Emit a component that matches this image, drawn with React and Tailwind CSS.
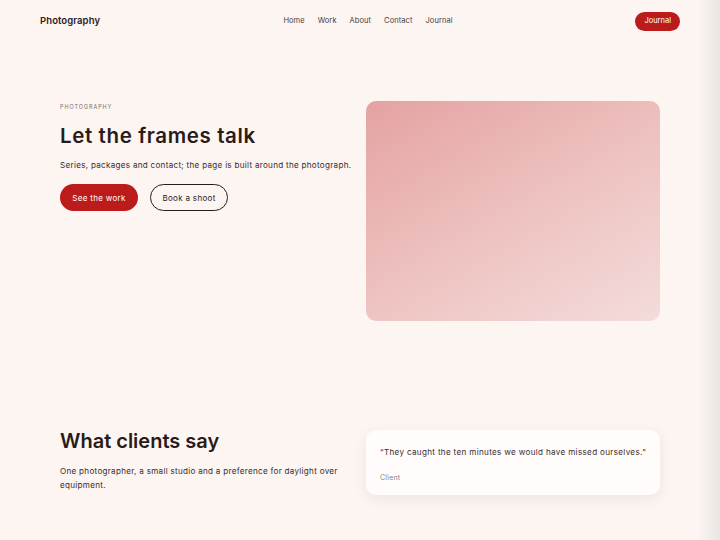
import React from "react";

// Photography landing: nav, hero with image block, testimonial strip
const navLinks = ["Home", "Work", "About", "Contact", "Journal"];

export default function App() {
  return (
    <div
      className="min-h-[540px] bg-[linear-gradient(to_right,#fcf5f2_calc(100%-22px),#e8e5e3)] text-[#2a1b1b]"
      style={{ fontFamily: "Inter, 'Noto Sans', sans-serif" }}
    >
      {/* Top bar */}
      <header className="flex h-[42px] items-center px-[40px]">
        <div className="flex-1 text-[9.5px] font-semibold tracking-[0.01em]">Photography</div>
        <nav className="ml-[16px] flex items-center gap-[13px] text-[7.5px] tracking-[0.01em] text-[#4a3c3c]">
          {navLinks.map((l) => (
            <a key={l} href="#">{l}</a>
          ))}
        </nav>
        <div className="flex flex-1 justify-end">
          <button className="h-[19px] rounded-full bg-[#bb1b1b] px-[9px] text-[7.5px] text-white">
            Journal
          </button>
        </div>
      </header>

      {/* Hero */}
      <section className="mx-auto mt-[59px] grid w-[600px] grid-cols-2 gap-[12px]">
        <div className="pt-[2px]">
          <p className="text-[5.5px] uppercase tracking-[0.17em] text-[#7a6d6b]">Photography</p>
          <h1 className="mt-[13px] text-[20.5px] font-semibold leading-[24px] tracking-[0.03em]">
            Let the frames talk
          </h1>
          <p className="mt-[11px] whitespace-nowrap text-[8.1px] tracking-[0.035em] text-[#3a2c2c]">
            Series, packages and contact; the page is built around the photograph.
          </p>
          <div className="mt-[13px] flex gap-[12px]">
            <button className="h-[27px] w-[78px] rounded-full bg-[#bb1b1b] text-[8px] tracking-[0.04em] text-white">
              See the work
            </button>
            <button className="h-[27px] w-[78px] rounded-full border border-[#2a1b1b] text-[8px] tracking-[0.04em]">
              Book a shoot
            </button>
          </div>
        </div>
        <div className="h-[220px] rounded-[10px] bg-[linear-gradient(150deg,#e4a2a2_0%,#edc1bf_50%,#f3dcda_100%)]" />
      </section>

      {/* Testimonials */}
      <section className="mx-auto mt-[109px] grid w-[600px] grid-cols-2 gap-[12px]">
        <div>
          <h2 className="text-[20px] font-semibold leading-[22px]">What clients say</h2>
          <p className="mt-[12px] w-[290px] text-[8.1px] leading-[14px] tracking-[0.035em] text-[#3a2c2c]">
            One photographer, a small studio and a preference for daylight over equipment.
          </p>
        </div>
        <div className="h-[65px] rounded-[10px] bg-[#fffcfb] px-[14px] pt-[16px] shadow-[0_4px_14px_rgba(120,60,50,0.09)]">
          <p className="whitespace-nowrap text-[8.1px] tracking-[0.04em] text-[#3a2c2c]">
            “They caught the ten minutes we would have missed ourselves.”
          </p>
          <p className="mt-[15px] text-[7px] tracking-[0.03em] text-[#8a7f7d]">Client</p>
        </div>
      </section>
    </div>
  );
}
